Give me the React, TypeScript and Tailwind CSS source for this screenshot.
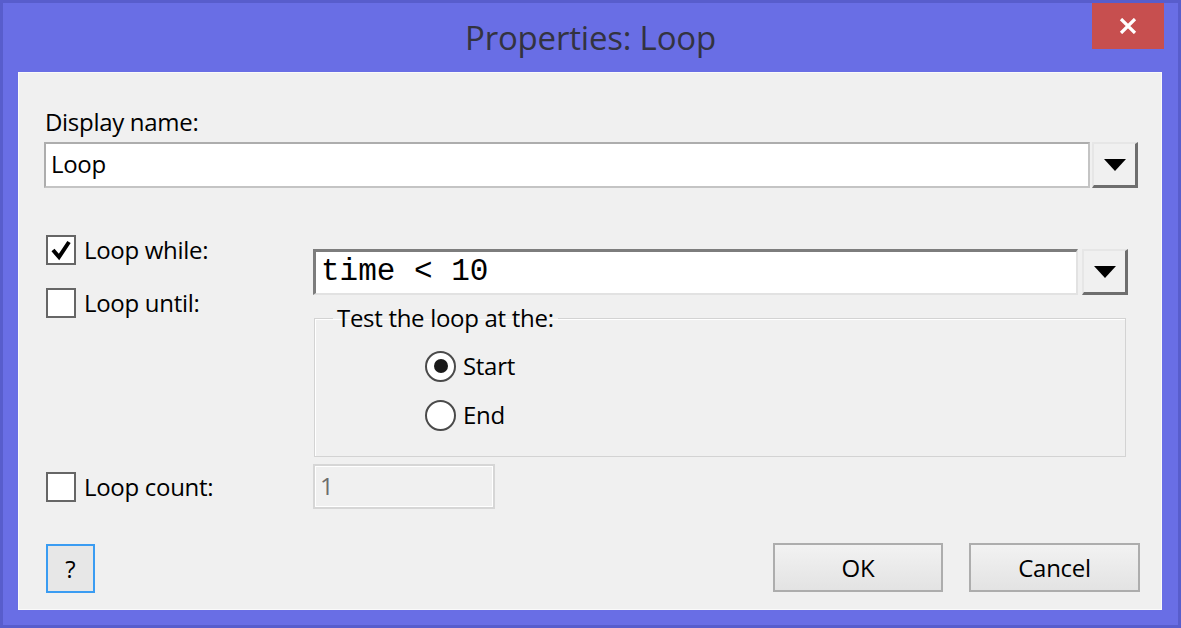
import React from "react"

function DropButton() {
    return (
        <div className="w-[46px] h-[46px] shrink-0 bg-[#f0f0f0] border-t-2 border-l-2 border-[#e6e6e6] border-r-[3px] border-b-[3px] border-r-[#6e6e6e] border-b-[#6e6e6e] flex items-center justify-center">
            <svg width="22" height="12" viewBox="0 0 22 12">
                <polygon points="0,0 22,0 11,12" fill="#000" />
            </svg>
        </div>
    )
}

function CheckBox({ checked, label }: { checked?: boolean; label: string }) {
    return (
        <div className="flex items-center h-[30px]">
            <div className="w-[30px] h-[30px] shrink-0 bg-white border-2 border-[#666666] flex items-center justify-center">
                {checked && (
                    <svg width="22" height="22" viewBox="0 0 22 22">
                        <path d="M3 11 L9 18 L19 3" fill="none" stroke="#000" strokeWidth="4" />
                    </svg>
                )}
            </div>
            <span className="ml-[8px] text-[24px] leading-[30px] text-black tracking-[-0.3px]">{label}</span>
        </div>
    )
}

function Radio({ checked, label }: { checked?: boolean; label: string }) {
    return (
        <div className="flex items-center h-[30px]">
            <div className="w-[31px] h-[31px] shrink-0 rounded-full bg-white border-2 border-[#4a4a4a] flex items-center justify-center">
                {checked && <div className="w-[14px] h-[14px] rounded-full bg-[#1a1a1a]" />}
            </div>
            <span className="ml-[7px] text-[24px] leading-[30px] text-black tracking-[-0.3px]">{label}</span>
        </div>
    )
}

export default function App() {
    return (
        <div className="w-[1181px] h-[628px] bg-[#696ee5] border-[3px] border-[#585dcc] flex flex-col font-['Open_Sans',sans-serif]">
            {/* title bar */}
            <div className="h-[69px] flex shrink-0">
                <div className="w-[86px]" />
                <div className="flex-1 text-center text-[33px] leading-[70px] text-[#333340] tracking-[-0.2px]">
                    Properties: Loop
                </div>
                <div className="w-[86px] flex justify-start">
                    <div className="w-[72px] h-[46px] bg-[#c74f4f] flex items-center justify-center">
                        <svg width="20" height="16" viewBox="0 0 20 16">
                            <path d="M3 1 L17 15 M17 1 L3 15" stroke="#fff" strokeWidth="3.2" />
                        </svg>
                    </div>
                </div>
            </div>

            {/* client area */}
            <div className="ml-[15px] mr-[16px] mb-[15px] flex-1 bg-[#f0f0f0] border border-[#fafafa] pl-[25px] pr-[23px] flex flex-col">
                <div className="mt-[34px] ml-[1px] text-[24px] leading-[30px] text-black tracking-[-0.3px]">Display name:</div>
                <div className="mt-[5px] flex gap-[2px]">
                    <div className="flex-1 h-[46px] bg-white border-2 border-[#adadad] border-b-[#c4c4c4] border-r-[#c4c4c4] px-[5px] text-[24px] leading-[40px] text-black tracking-[-0.3px]">
                        Loop
                    </div>
                    <DropButton />
                </div>

                {/* loop while / until */}
                <div className="mt-[47px] flex h-[222px]">
                    <div className="w-[269px] shrink-0 pl-[2px] flex flex-col gap-[23px]">
                        <CheckBox checked label="Loop while:" />
                        <CheckBox label="Loop until:" />
                    </div>
                    <div className="flex-1 pr-[10px] flex flex-col">
                        <div className="mt-[14px] flex gap-[4px]">
                            <div className="flex-1 h-[46px] bg-white border-t-[3px] border-l-[3px] border-[#7d7d7d] border-r-2 border-b-2 border-r-[#e2e2e2] border-b-[#e2e2e2] pl-[5px] font-['Liberation_Mono',monospace] text-[31px] leading-[40px] text-black">
                                time &lt; 10
                            </div>
                            <DropButton />
                        </div>
                        <fieldset className="mt-[8px] ml-[1px] mr-[2px] h-[154px] border border-[#d3d3d3] shadow-[inset_1px_1px_0_#ffffff]">
                            <legend className="ml-[18px] px-[4px] text-[24px] leading-[30px] text-black tracking-[-0.3px]">Test the loop at the:</legend>
                            <div className="mt-[18px] pl-[110px] flex flex-col gap-[19px]">
                                <Radio checked label="Start" />
                                <Radio label="End" />
                            </div>
                        </fieldset>
                    </div>
                </div>

                {/* loop count */}
                <div className="mt-[7px] flex items-center h-[45px]">
                    <div className="w-[269px] shrink-0 pl-[2px]">
                        <CheckBox label="Loop count:" />
                    </div>
                    <div className="w-[182px] h-[45px] border-2 border-[#d6d6d6] shadow-[inset_0_0_0_1px_#ffffff] bg-[#f0f0f0] px-[5px] text-[24px] leading-[40px] text-[#6d6d6d]">
                        1
                    </div>
                </div>

                {/* buttons */}
                <div className="mt-[34px] flex items-start">
                    <div className="mt-[1px] ml-[2px] w-[49px] h-[49px] border-2 border-[#3a9cf2] bg-[#e7e7e7] flex items-center justify-center text-[24px] text-black">
                        ?
                    </div>
                    <div className="flex-1" />
                    <div className="w-[170px] h-[49px] border-2 border-[#adadad] bg-gradient-to-b from-[#f2f2f2] to-[#e3e3e3] flex items-center justify-center text-[24px] text-black tracking-[-0.3px]">
                        OK
                    </div>
                    <div className="ml-[26px] -mr-[2px] w-[171px] h-[49px] border-2 border-[#adadad] bg-gradient-to-b from-[#f2f2f2] to-[#e3e3e3] flex items-center justify-center text-[24px] text-black tracking-[-0.3px]">
                        Cancel
                    </div>
                </div>
            </div>
        </div>
    )
}
